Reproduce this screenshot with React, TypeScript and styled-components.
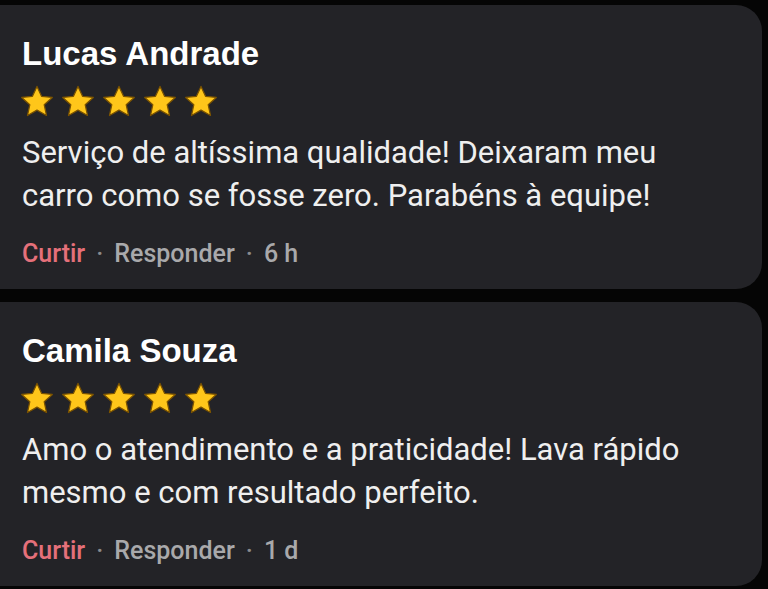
import React from "react";
import styled, { createGlobalStyle } from "styled-components";

type Review = {
  name: string;
  text: string;
  time: string;
};

const reviews: Review[] = [
  {
    name: "Lucas Andrade",
    text: "Serviço de altíssima qualidade! Deixaram meu carro como se fosse zero. Parabéns à equipe!",
    time: "6 h",
  },
  {
    name: "Camila Souza",
    text: "Amo o atendimento e a praticidade! Lava rápido mesmo e com resultado perfeito.",
    time: "1 d",
  },
];

// estrela de avaliação (amarela com contorno escuro)
const Star: React.FC = () => (
  <svg width="34" height="34" viewBox="0 0 24 24">
    <path
      d="M12 1l3.2 7 7.6.8-5.7 5.2 1.6 7.5L12 17.7l-6.7 3.8 1.6-7.5L1.2 8.8 8.8 8z"
      fill="#ffc61a"
      stroke="#7a5200"
      strokeWidth="0.9"
      strokeLinejoin="round"
    />
  </svg>
);

export default function App() {
  return (
    <>
      <GlobalStyle />
      <Page>
        {reviews.map((r) => (
          <Card key={r.name}>
            <Name>{r.name}</Name>
            <Stars>
              {[0, 1, 2, 3, 4].map((i) => (
                <Star key={i} />
              ))}
            </Stars>
            <Body>{r.text}</Body>
            <Meta>
              <Like>Curtir</Like>
              <Dot>·</Dot>
              <span>Responder</span>
              <Dot>·</Dot>
              <span>{r.time}</span>
            </Meta>
          </Card>
        ))}
      </Page>
    </>
  );
}

const GlobalStyle = createGlobalStyle`
  html, body {
    margin: 0;
    padding: 0;
    background: #050505;
  }
`;

const Page = styled.div`
  display: flex;
  flex-direction: column;
  gap: 13px;
  width: 768px;
  height: 589px;
  padding: 5px 6px 0 0;
  box-sizing: border-box;
  overflow: hidden;
  font-family: Roboto, "Liberation Sans", sans-serif;
`;

const Card = styled.div`
  display: flex;
  flex-direction: column;
  height: 284px;
  margin-left: -30px;
  padding: 29px 0 0 52px;
  box-sizing: border-box;
  background: #232327;
  border-radius: 26px;
`;

const Name = styled.div`
  font-family: "Liberation Sans", Arial, sans-serif;
  font-size: 33px;
  font-weight: 700;
  line-height: 40px;
  color: #ffffff;
`;

const Stars = styled.div`
  display: flex;
  gap: 7px;
  margin-top: 11px;
  margin-left: -2px;
`;

const Body = styled.p`
  margin: 12px 0 0;
  width: 660px;
  font-size: 31px;
  line-height: 43px;
  color: #efefef;
`;

const Meta = styled.div`
  display: flex;
  align-items: center;
  gap: 11px;
  margin-top: 22px;
  font-size: 25px;
  line-height: 30px;
  font-weight: 500;
  color: #a9a9ab;
`;

const Like = styled.span`
  color: #e5707a;
`;

const Dot = styled.span`
  color: #8a8a8c;
`;
